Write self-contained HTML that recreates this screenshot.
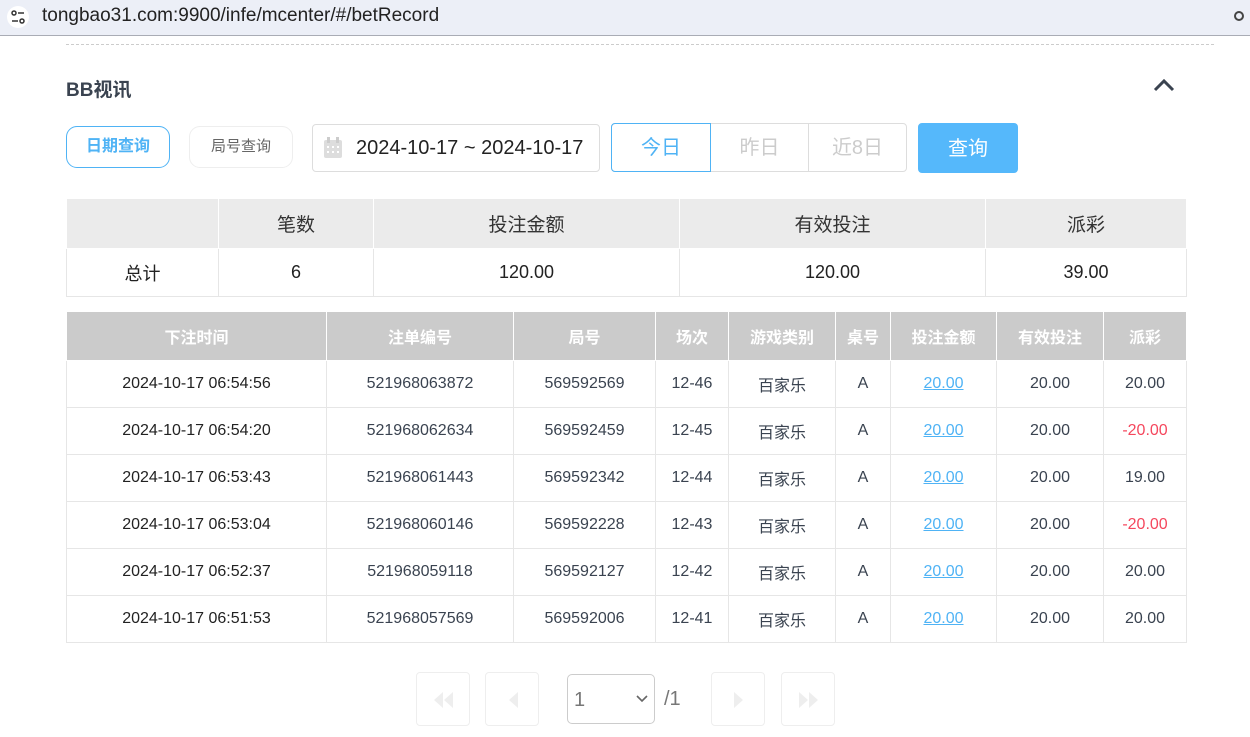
<!DOCTYPE html>
<html><head><meta charset="utf-8"><style>
*{box-sizing:border-box;margin:0;padding:0}
body{width:1250px;height:737px;overflow:hidden;background:#fff;font-family:"Liberation Sans","Noto Sans CJK SC",sans-serif;position:relative}
.abs{position:absolute}
.bar{left:0;top:0;width:1250px;height:36px;background:#eceff7;border-bottom:1px solid #a9acb5}
.url{left:42px;top:5px;font-size:19px;color:#222}
table{border-collapse:collapse;position:absolute;table-layout:fixed}
td,th{text-align:center;border:1px solid #e6e6e6;padding:0}
.sum{left:66px;top:198px;width:1120px}
.sum th{height:50px;background:#ebebeb;font-weight:normal;font-size:19px;color:#333;border:1px solid #fff}
.sum td{height:48px;font-size:18px;color:#222}
.det{left:66px;top:312px;width:1120px}
.det th{height:48px;background:#cbcbcb;color:#fff;font-size:16px;border:1px solid #fff;border-top:none}
.det td{height:47px;font-size:16px;color:#3a4350}
.det td:first-child{color:#222}
.lnk{color:#4fb3f5;text-decoration:underline}
.det td.red{color:#f5475d}
.btn{border-radius:11px;text-align:center;font-size:15px}
.pg{width:54px;height:54px;border:1px solid #eee;border-radius:4px;top:672px}
</style></head><body>
<div class="abs bar"></div>
<svg class="abs" style="left:7px;top:6px" width="22" height="22" viewBox="0 0 22 22"><circle cx="11" cy="11" r="11" fill="#fff"/><circle cx="7" cy="7" r="2" fill="none" stroke="#333" stroke-width="1.5"/><line x1="11" y1="7" x2="17" y2="7" stroke="#333" stroke-width="1.5"/><line x1="5" y1="15" x2="11" y2="15" stroke="#333" stroke-width="1.5"/><circle cx="15" cy="15" r="2" fill="none" stroke="#333" stroke-width="1.5"/></svg>
<div class="abs url">tongbao31.com:9900/infe/mcenter/#/betRecord</div>
<div class="abs" style="left:1234px;top:11px;width:10px;height:10px;border:2px solid #444;border-radius:50%"></div>
<div class="abs" style="left:66px;top:44px;width:1148px;border-top:1px dashed #ccc"></div>
<div class="abs" style="left:66px;top:75px;font-size:19px;font-weight:bold;color:#3a4350">BB视讯</div>
<svg class="abs" style="left:1152px;top:78px" width="24" height="14"><polyline points="3,12 12,3 21,12" fill="none" stroke="#3a4350" stroke-width="3"/></svg>
<div class="abs btn" style="left:66px;top:126px;width:104px;height:42px;border:1px solid #4fb3f5;color:#4fb3f5;font-weight:bold;line-height:40px;font-size:16px">日期查询</div>
<div class="abs btn" style="left:189px;top:126px;width:104px;height:42px;border:1px solid #eee;color:#666;line-height:40px">局号查询</div>
<div class="abs" style="left:312px;top:124px;width:288px;height:48px;border:1px solid #ddd;border-radius:4px"></div>
<svg class="abs" style="left:323px;top:137px" width="20" height="22"><rect x="1" y="3" width="18" height="18" rx="2" fill="#ddd"/><rect x="4" y="0" width="3" height="6" fill="#ccc"/><rect x="13" y="0" width="3" height="6" fill="#ccc"/><g fill="#fff"><rect x="4" y="9" width="2" height="2"/><rect x="9" y="9" width="2" height="2"/><rect x="14" y="9" width="2" height="2"/><rect x="4" y="14" width="2" height="2"/><rect x="9" y="14" width="2" height="2"/><rect x="14" y="14" width="2" height="2"/></g></svg>
<div class="abs" style="left:356px;top:137px;font-size:20px;color:#222">2024-10-17 ~ 2024-10-17</div>
<div class="abs" style="left:611px;top:123px;width:296px;height:49px;border:1px solid #ddd;border-radius:4px"></div>
<div class="abs" style="left:611px;top:123px;width:100px;height:49px;border:1px solid #4fb3f5;border-radius:4px 0 0 4px;color:#4fb3f5;font-size:20px;text-align:center;line-height:49px">今日</div>
<div class="abs" style="left:711px;top:124px;width:97px;height:47px;color:#ccc;font-size:20px;text-align:center;line-height:49px">昨日</div>
<div class="abs" style="left:808px;top:124px;width:98px;height:47px;border-left:1px solid #ddd;color:#ccc;font-size:20px;text-align:center;line-height:49px">近8日</div>
<div class="abs" style="left:918px;top:123px;width:100px;height:50px;background:#55b8fb;border-radius:4px;color:#fff;font-size:20px;text-align:center;line-height:52px">查询</div>

<table class="sum"><colgroup><col style="width:152px"><col style="width:155px"><col style="width:306px"><col style="width:306px"><col style="width:201px"></colgroup>
<tr><th></th><th>笔数</th><th>投注金额</th><th>有效投注</th><th>派彩</th></tr>
<tr><td>总计</td><td>6</td><td>120.00</td><td>120.00</td><td>39.00</td></tr></table>

<table class="det"><colgroup><col style="width:260px"><col style="width:187px"><col style="width:142px"><col style="width:73px"><col style="width:107px"><col style="width:55px"><col style="width:106px"><col style="width:107px"><col style="width:83px"></colgroup>
<tr><th>下注时间</th><th>注单编号</th><th>局号</th><th>场次</th><th>游戏类别</th><th>桌号</th><th>投注金额</th><th>有效投注</th><th>派彩</th></tr>
<tr><td>2024-10-17 06:54:56</td><td>521968063872</td><td>569592569</td><td>12-46</td><td>百家乐</td><td>A</td><td><span class="lnk">20.00</span></td><td>20.00</td><td>20.00</td></tr>
<tr><td>2024-10-17 06:54:20</td><td>521968062634</td><td>569592459</td><td>12-45</td><td>百家乐</td><td>A</td><td><span class="lnk">20.00</span></td><td>20.00</td><td class="red">-20.00</td></tr>
<tr><td>2024-10-17 06:53:43</td><td>521968061443</td><td>569592342</td><td>12-44</td><td>百家乐</td><td>A</td><td><span class="lnk">20.00</span></td><td>20.00</td><td>19.00</td></tr>
<tr><td>2024-10-17 06:53:04</td><td>521968060146</td><td>569592228</td><td>12-43</td><td>百家乐</td><td>A</td><td><span class="lnk">20.00</span></td><td>20.00</td><td class="red">-20.00</td></tr>
<tr><td>2024-10-17 06:52:37</td><td>521968059118</td><td>569592127</td><td>12-42</td><td>百家乐</td><td>A</td><td><span class="lnk">20.00</span></td><td>20.00</td><td>20.00</td></tr>
<tr><td>2024-10-17 06:51:53</td><td>521968057569</td><td>569592006</td><td>12-41</td><td>百家乐</td><td>A</td><td><span class="lnk">20.00</span></td><td>20.00</td><td>20.00</td></tr>
</table>

<div class="abs pg" style="left:416px"><svg width="54" height="54"><polygon points="26,19 17,27 26,35" fill="#eee"/><polygon points="36,19 27,27 36,35" fill="#eee"/></svg></div>
<div class="abs pg" style="left:485px"><svg width="54" height="54"><polygon points="32,19 23,27 32,35" fill="#eee"/></svg></div>
<div class="abs" style="left:567px;top:674px;width:88px;height:50px;border:1px solid #ccc;border-radius:5px"><span class="abs" style="left:6px;top:14px;font-size:20px;color:#777">1</span><svg class="abs" style="left:68px;top:20px" width="12" height="8"><polyline points="1,1 6,6 11,1" fill="none" stroke="#666" stroke-width="1.6"/></svg></div>
<div class="abs" style="left:664px;top:688px;font-size:20px;color:#777">/1</div>
<div class="abs pg" style="left:711px"><svg width="54" height="54"><polygon points="22,19 31,27 22,35" fill="#eee"/></svg></div>
<div class="abs pg" style="left:781px"><svg width="54" height="54"><polygon points="17,19 26,27 17,35" fill="#eee"/><polygon points="27,19 36,27 27,35" fill="#eee"/></svg></div>
</body></html>
